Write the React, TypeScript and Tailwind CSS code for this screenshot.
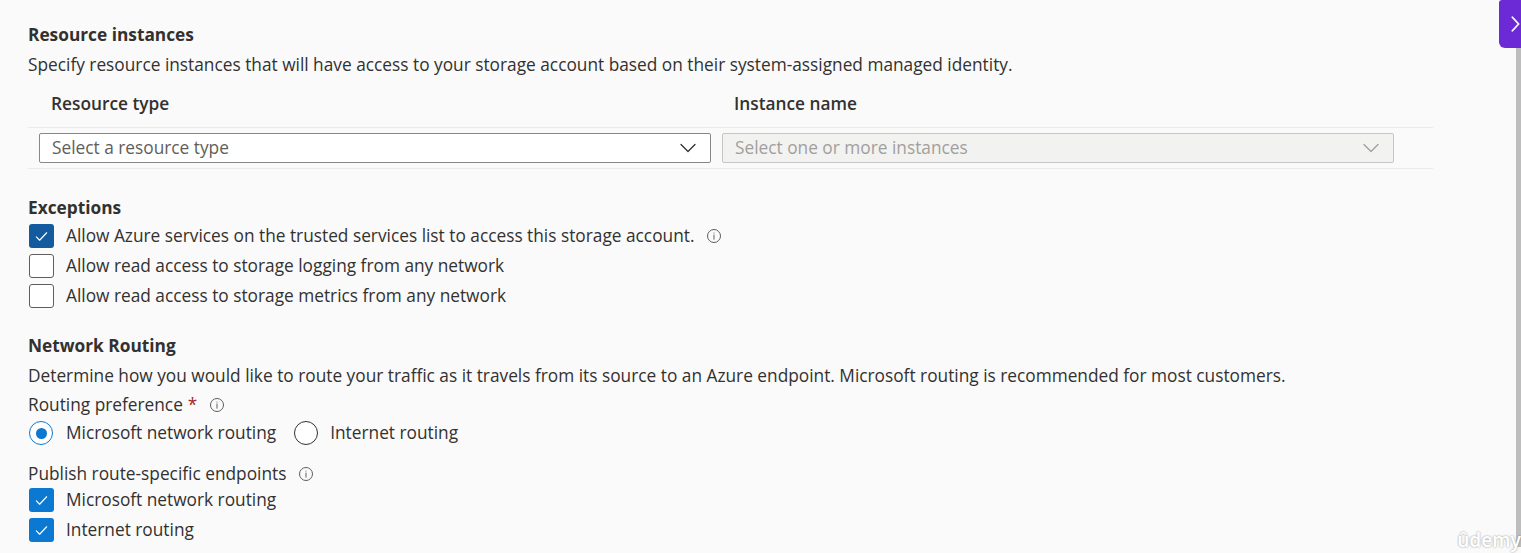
import React from "react";

// Small info icon used next to labels
const InfoIcon = ({ className = "" }: { className?: string }) => (
  <svg viewBox="0 0 16 16" className={`w-[16px] h-[16px] ${className}`} fill="none" stroke="#605e5c" strokeWidth={1}>
    <circle cx="8" cy="8" r="6.5" />
    <path d="M8 7v4.2" strokeLinecap="round" />
    <circle cx="8" cy="5" r="0.6" fill="#605e5c" stroke="none" />
  </svg>
);

const Chevron = ({ color }: { color: string }) => (
  <svg viewBox="0 0 16 10" className="w-[16px] h-[10px]" fill="none" stroke={color} strokeWidth={1.3}>
    <path d="M1 1.5l7 7 7-7" strokeLinecap="round" strokeLinejoin="round" />
  </svg>
);

const Checkbox = ({ checked, dark }: { checked?: boolean; dark?: boolean }) =>
  checked ? (
    <span
      className={`flex w-[25px] h-[24px] items-center justify-center rounded-[3px] ${
        dark ? "bg-[#145a9e]" : "bg-[#0b78d2]"
      }`}
    >
      <svg viewBox="0 0 16 16" className="w-[15px] h-[15px]" fill="none" stroke="white" strokeWidth={1.2}>
        <path d="M2.5 8.5l3.5 3.5 7.5-8" strokeLinecap="round" strokeLinejoin="round" />
      </svg>
    </span>
  ) : (
    <span className="block w-[25px] h-[24px] rounded-[3px] border border-[#5f5e5c] bg-white" />
  );

const Radio = ({ selected }: { selected?: boolean }) =>
  selected ? (
    <span className="flex w-[24px] h-[24px] items-center justify-center rounded-full border border-[#0b78d2] bg-white">
      <span className="block w-[11px] h-[11px] rounded-full bg-[#0b78d2]" />
    </span>
  ) : (
    <span className="block w-[24px] h-[24px] rounded-full border border-[#323130] bg-white" />
  );

const CheckRow = ({ label, checked, dark, info }: { label: string; checked?: boolean; dark?: boolean; info?: boolean }) => (
  <div className="flex h-[30px] items-center">
    <span className="ml-[1px]">
      <Checkbox checked={checked} dark={dark} />
    </span>
    <span className="ml-[12px]">{label}</span>
    {info && <InfoIcon className="ml-[12px]" />}
  </div>
);

export default function App() {
  return (
    <div
      className="relative w-[1521px] h-[553px] overflow-hidden bg-[#fafafa] text-[#323130] text-[17.3px] leading-[20px]"
      style={{ fontFamily: '"Open Sans", "Noto Sans", sans-serif' }}
    >
      <div className="pl-[28px] pt-[25px]">
        {/* Resource instances */}
        <div className="font-bold h-[20px]">Resource instances</div>
        <div className="mt-[10px] h-[20px]">
          Specify resource instances that will have access to your storage account based on their system-assigned managed identity.
        </div>

        <div className="w-[1405px] mt-[19px]">
          <div className="flex h-[20px] font-semibold">
            <div className="w-[694px] pl-[23px]">Resource type</div>
            <div className="pl-[12px]">Instance name</div>
          </div>
          <div className="mt-[13px] border-t border-b border-[#ebebeb] py-[5px] pl-[11px] flex gap-[11px]">
            <div className="flex items-center justify-between w-[672px] h-[30px] rounded-[2px] border border-[#8a8886] bg-white pl-[12px] pr-[14px] text-[#605e5c]">
              <span>Select a resource type</span>
              <Chevron color="#323130" />
            </div>
            <div className="flex items-center justify-between w-[672px] h-[30px] rounded-[2px] border border-[#c8c6c4] bg-[#f2f2f0] pl-[12px] pr-[14px] text-[#a19f9d]">
              <span>Select one or more instances</span>
              <Chevron color="#a19f9d" />
            </div>
          </div>
        </div>

        {/* Exceptions */}
        <div className="mt-[29px] font-bold h-[20px]">Exceptions</div>
        <div className="mt-[3px]">
          <CheckRow label="Allow Azure services on the trusted services list to access this storage account." checked dark info />
          <CheckRow label="Allow read access to storage logging from any network" />
          <CheckRow label="Allow read access to storage metrics from any network" />
        </div>

        {/* Network Routing */}
        <div className="mt-[25px] font-bold h-[20px]">Network Routing</div>
        <div className="mt-[10px] h-[20px]">
          Determine how you would like to route your traffic as it travels from its source to an Azure endpoint. Microsoft routing is recommended for most customers.
        </div>
        <div className="mt-[9px] h-[20px] flex items-center">
          <span>Routing preference</span>
          <span className="ml-[5px] text-[#a4262c]">*</span>
          <InfoIcon className="ml-[12px]" />
        </div>
        <div className="mt-[3px] flex h-[30px] items-center">
          <span className="ml-[1px]">
            <Radio selected />
          </span>
          <span className="ml-[13px]">Microsoft network routing</span>
          <span className="ml-[18px]">
            <Radio />
          </span>
          <span className="ml-[12px]">Internet routing</span>
        </div>
        <div className="mt-[16px] h-[20px] flex items-center">
          <span>Publish route-specific endpoints</span>
          <InfoIcon className="ml-[12px]" />
        </div>
        <div className="mt-[1px]">
          <CheckRow label="Microsoft network routing" checked />
          <CheckRow label="Internet routing" checked />
        </div>
      </div>

      {/* Collapse tab on the right */}
      <div className="absolute right-0 top-0 w-[22px] h-[48px] rounded-bl-[6px] rounded-tl-[3px] bg-[#6b2ad6] flex items-center justify-end pr-[1px]">
        <svg viewBox="0 0 10 18" className="w-[9px] h-[18px]" fill="none" stroke="white" strokeWidth={2}>
          <path d="M1.5 1.5l7 7.5-7 7.5" strokeLinecap="round" strokeLinejoin="round" />
        </svg>
      </div>
      <div className="absolute right-0 top-[48px] bottom-[6px] w-[5px] bg-[#bdbdbd]" />

      {/* Watermark */}
      <div
        className="absolute right-0 bottom-[2px] text-[19px] leading-[22px] font-semibold text-white [text-shadow:0_0_2px_rgba(0,0,0,0.45)]"
        style={{ fontFamily: '"Noto Sans", sans-serif' }}
      >
        ûdemy
      </div>
    </div>
  );
}
